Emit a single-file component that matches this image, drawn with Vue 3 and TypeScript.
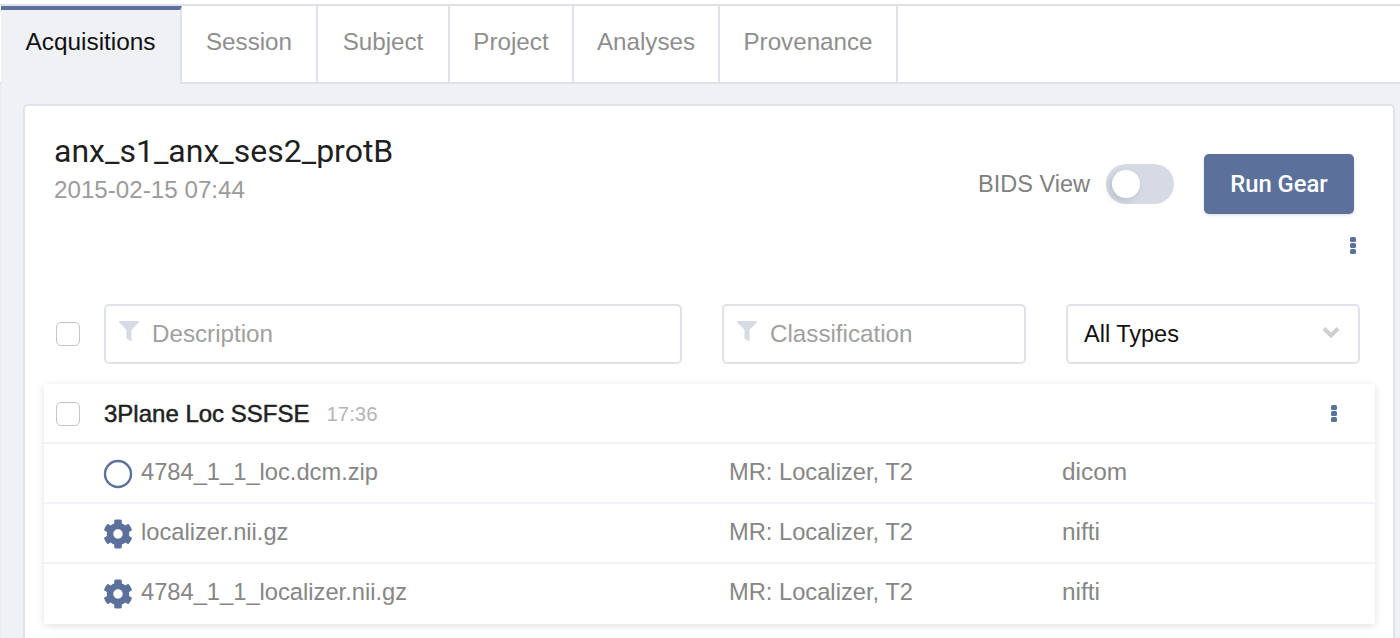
<script setup lang="ts">
const tabs = ['Session', 'Subject', 'Project', 'Analyses', 'Provenance']
const files = [
  { name: '4784_1_1_loc.dcm.zip', cls: 'MR: Localizer, T2', type: 'dicom', icon: 'circle' },
  { name: 'localizer.nii.gz', cls: 'MR: Localizer, T2', type: 'nifti', icon: 'gear' },
  { name: '4784_1_1_localizer.nii.gz', cls: 'MR: Localizer, T2', type: 'nifti', icon: 'gear' },
]
const gear = 'M487.4 315.7l-42.6-24.6c4.3-23.2 4.3-47 0-70.2l42.6-24.6c4.9-2.8 7.1-8.6 5.5-14-11.1-35.6-30-67.8-54.7-94.6-3.8-4.1-10-5.1-14.8-2.3L380.8 110c-17.9-15.4-38.5-27.3-60.8-35.1V25.8c0-5.6-3.9-10.5-9.4-11.7-36.7-8.2-74.3-7.8-109.2 0-5.5 1.2-9.4 6.1-9.4 11.7V75c-22.2 7.9-42.8 19.8-60.8 35.1L88.7 85.5c-4.9-2.8-11-1.9-14.8 2.3-24.7 26.7-43.6 58.9-54.7 94.6-1.7 5.4.6 11.2 5.5 14L67.3 221c-4.3 23.2-4.3 47 0 70.2l-42.6 24.6c-4.9 2.8-7.1 8.6-5.5 14 11.1 35.6 30 67.8 54.7 94.6 3.8 4.1 10 5.1 14.8 2.3l42.6-24.6c17.9 15.4 38.5 27.3 60.8 35.1v49.2c0 5.6 3.9 10.5 9.4 11.7 36.7 8.2 74.3 7.8 109.2 0 5.5-1.2 9.4-6.1 9.4-11.7v-49.2c22.2-7.9 42.8-19.8 60.8-35.1l42.6 24.6c4.9 2.8 11 1.9 14.8-2.3 24.7-26.7 43.6-58.9 54.7-94.6 1.5-5.5-.7-11.3-5.6-14.1zM256 336c-44.1 0-80-35.9-80-80s35.9-80 80-80 80 35.9 80 80-35.9 80-80 80z'
const funnel = 'M487.976 0H24.028C2.71 0-8.047 25.866 7.058 40.971L192 225.941V432c0 7.831 3.821 15.17 10.237 19.662l80 55.98C298.02 518.69 320 507.493 320 487.98V225.941l184.947-184.97C520.021 25.896 509.338 0 487.976 0z'
</script>

<template>
  <div class="page">
    <nav class="tabs">
      <div class="tab active">Acquisitions</div>
      <div v-for="t in tabs" :key="t" class="tab">{{ t }}</div>
    </nav>
    <main class="content">
      <section class="card">
        <header class="head">
          <div>
            <h1 class="title">anx_s1_anx_ses2_protB</h1>
            <div class="date">2015-02-15 07:44</div>
          </div>
          <div class="actions">
            <span class="bids">BIDS View</span>
            <span class="switch"><span class="knob"></span></span>
            <button class="run">Run Gear</button>
          </div>
        </header>
        <div class="more-row">
          <span class="dots"><i></i><i></i><i></i></span>
        </div>
        <div class="filters">
          <span class="check"></span>
          <div class="field desc">
            <svg class="funnel" viewBox="0 0 512 512"><path :d="funnel" /></svg>
            <span>Description</span>
          </div>
          <div class="field cls">
            <svg class="funnel" viewBox="0 0 512 512"><path :d="funnel" /></svg>
            <span>Classification</span>
          </div>
          <div class="field select">
            <span>All Types</span>
            <svg class="chev" viewBox="0 0 18 12"><path d="M2 2.5l7 7 7-7" /></svg>
          </div>
        </div>
        <div class="list">
          <div class="group">
            <span class="check"></span>
            <strong class="name">3Plane Loc SSFSE</strong>
            <span class="time">17:36</span>
            <span class="dots"><i></i><i></i><i></i></span>
          </div>
          <div v-for="f in files" :key="f.name" class="row">
            <svg v-if="f.icon === 'circle'" class="icon" viewBox="0 0 30 30"><circle cx="15" cy="15" r="13" class="ring" /></svg>
            <svg v-else class="icon" viewBox="0 0 512 512"><path :d="gear" /></svg>
            <span class="fname">{{ f.name }}</span>
            <span class="fcls">{{ f.cls }}</span>
            <span class="ftype">{{ f.type }}</span>
          </div>
        </div>
      </section>
    </main>
  </div>
</template>

<style>
html, body { margin: 0; background: #fff; overflow: hidden; }
</style>

<style scoped>
.page { height: 638px; overflow: hidden; font-family: "Liberation Sans", Arial, sans-serif; padding-top: 4px; box-sizing: border-box; }
.tabs { display: flex; height: 80px; box-sizing: border-box; border-top: 2px solid #dfe2ea; border-bottom: 2px solid #dfe2ea; font-size: 24.2px; color: #8e8e8e; }
.tab { display: flex; align-items: center; justify-content: center; box-sizing: border-box; padding-bottom: 4px; border-right: 2px solid #dfe2ea; height: 76px; }
.tab:nth-child(2) { width: 136px; }
.tab:nth-child(3) { width: 132px; }
.tab:nth-child(4) { width: 124px; }
.tab:nth-child(5) { width: 146px; }
.tab:nth-child(6) { width: 178px; }
.active { margin: 0 0 -2px 1px; height: 78px; width: 181px; background: #eff1f5; color: #111; font-size: 24.4px; border-top: 4px solid #5b719b; padding: 0 0 10px 0; }
.content { background: #eff1f5; padding: 20px 5px 0 23px; height: 560px; border-left: 1px solid #e8ebf1; }
.card { background: #fff; border: 2px solid #dfe2ea; border-bottom: 0; border-radius: 5px 5px 0 0; padding: 0 18px 0 19px; height: 540px; margin-left: -1px; }
.head { display: flex; justify-content: space-between; padding: 27px 21px 0 10px; height: 100px; box-sizing: border-box; }
.title { margin: 0; font: 400 32px/36px Roboto, sans-serif; color: #1f1f1f; }
.date { font-size: 24.2px; line-height: 30px; color: #9b9b9b; margin-top: 6px; }
.actions { display: flex; align-items: center; height: 60px; margin-top: 21px; }
.bids { font-size: 23.5px; color: #808080; margin-right: 16px; }
.switch { width: 68px; height: 40px; border-radius: 20px; background: #d5dae4; display: flex; align-items: center; padding-left: 6px; box-sizing: border-box; margin-right: 30px; }
.knob { width: 28px; height: 28px; border-radius: 50%; background: #fff; box-shadow: -3px 3px 7px rgba(80, 90, 110, 0.2); }
.run { width: 150px; height: 60px; border: 0; border-radius: 5px; background: #5b719b; color: #fff; font: 500 23.8px Roboto, sans-serif; box-shadow: 0 1px 3px rgba(0, 0, 0, 0.15); padding: 0; }
.more-row { display: flex; justify-content: flex-end; height: 98px; padding: 31px 19px 0 0; box-sizing: border-box; }
.dots { display: flex; flex-direction: column; gap: 1px; width: 6px; }
.dots i { display: block; width: 6px; height: 5px; border-radius: 1.5px; background: #5b719b; }
.filters { display: flex; align-items: center; height: 60px; padding-left: 12px; }
.check { width: 24px; height: 24px; box-sizing: border-box; border: 1.5px solid #c4c4c4; border-radius: 5px; background: #fff; flex: none; }
.field { height: 60px; box-sizing: border-box; border: 2px solid #dfe2ea; border-radius: 5px; display: flex; align-items: center; font-size: 24.2px; color: #a0a0a0; background: #fff; }
.desc { width: 578px; margin-left: 24px; padding-left: 13px; }
.cls { width: 304px; margin-left: 40px; padding-left: 13px; }
.select { width: 294px; margin-left: 40px; padding: 0 18px 0 16px; color: #111; font-size: 23.5px; justify-content: space-between; }
.funnel { width: 20px; height: 20px; fill: #d5dae4; margin-right: 13px; margin-top: -6px; }
.chev { width: 18px; height: 12px; fill: none; stroke: #cfcfcf; stroke-width: 4; margin-top: -4px; }
.list { width: 1331px; margin: 20px 0 0 0; box-shadow: 0 2px 8px rgba(0, 0, 0, 0.12); background: #fff; height: 240px; }
.group { display: flex; align-items: center; height: 60px; box-sizing: border-box; border-bottom: 2px solid #f2f3f8; padding: 2px 38px 0 12px; }
.group .dots { margin-top: -2px; }
.name { font-size: 24px; font-weight: 400; -webkit-text-stroke: 0.5px #222; color: #222; margin-left: 24px; }
.time { font-size: 20.4px; color: #b5b5b5; margin-left: 17px; flex: 1; }
.row { display: grid; grid-template-columns: 37px 588px 333px 1fr; align-items: center; height: 60px; box-sizing: border-box; border-bottom: 2px solid #f2f3f8; padding: 0 0 2px 60px; font-size: 23.7px; color: #868686; }
.row:last-child { border-bottom-color: transparent; }
.ftype { font-size: 24.4px; }
.icon { width: 30px; height: 30px; fill: #5b719b; margin: 4px 0 0 -1px; }
.ring { fill: none; stroke: #5b719b; stroke-width: 2.4; }
</style>
